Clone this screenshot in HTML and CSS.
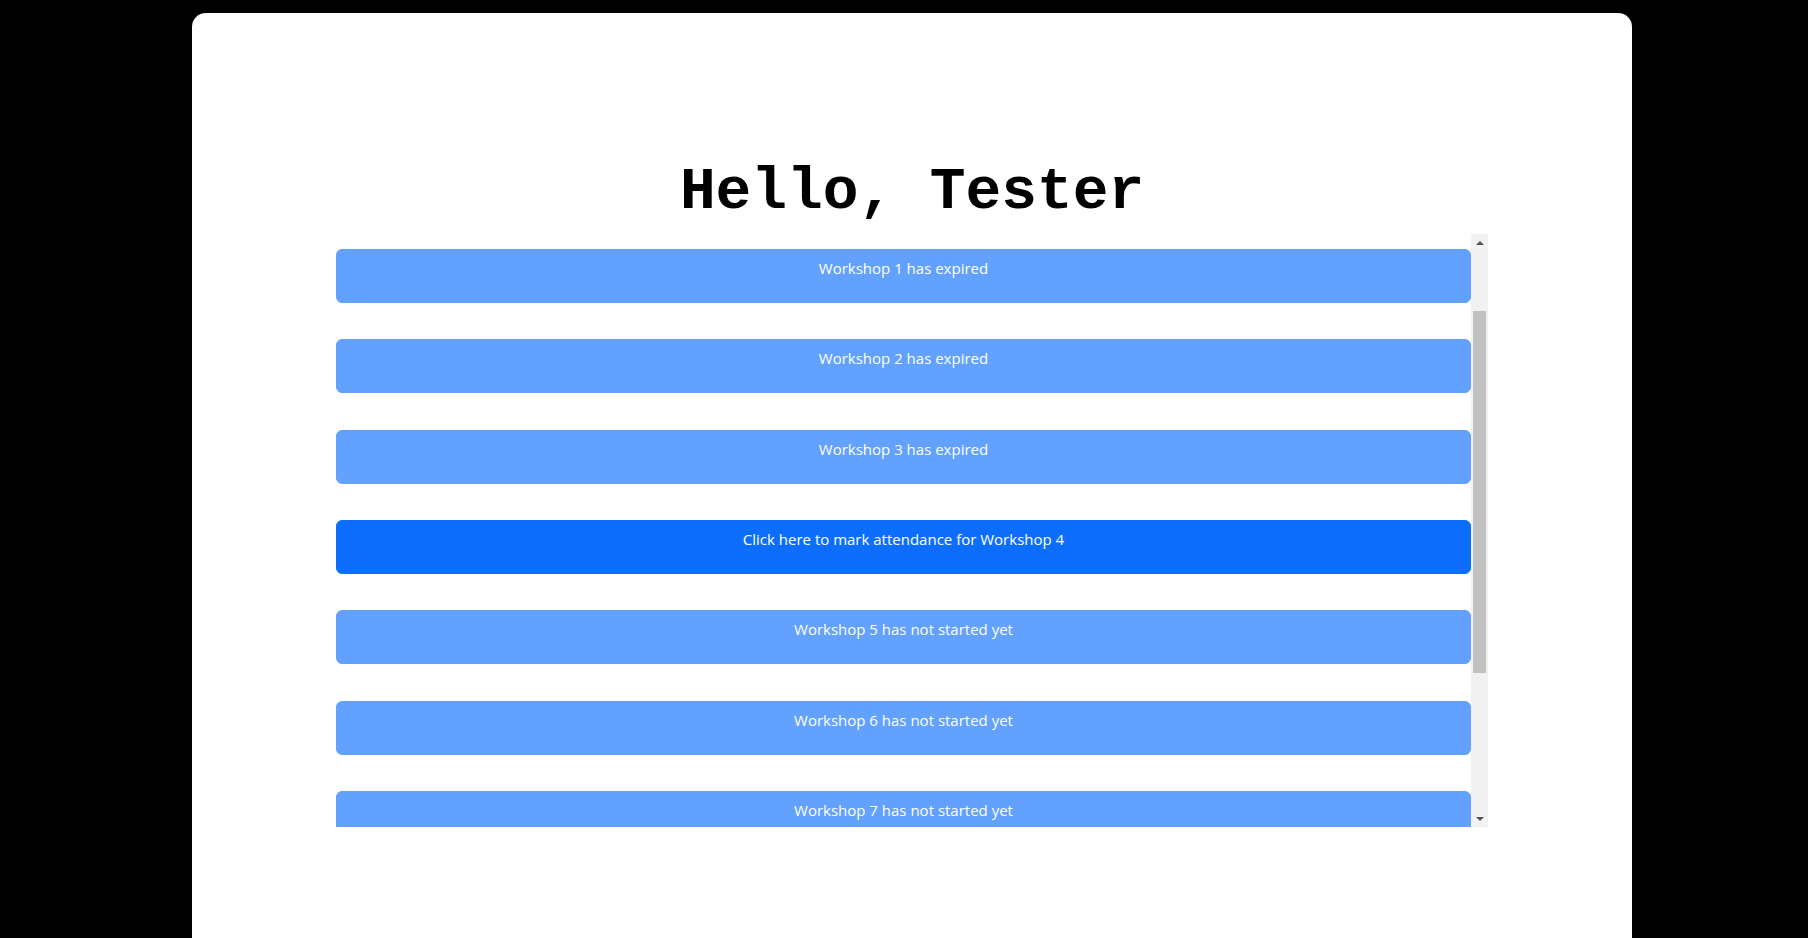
FILE: index.html
```html
<!DOCTYPE html>
<html>
<head>
<meta charset="utf-8">
<title>Workshops</title>
<link rel="stylesheet" href="styles.css">
</head>
<body>
<div class="page">
  <main class="card">
    <h1 class="title">Hello, Tester</h1>
    <div class="list-wrap">
      <div class="list">
        <button class="btn btn-disabled" disabled>Workshop 1 has expired</button>
        <button class="btn btn-disabled" disabled>Workshop 2 has expired</button>
        <button class="btn btn-disabled" disabled>Workshop 3 has expired</button>
        <button class="btn btn-active">Click here to mark attendance for Workshop 4</button>
        <button class="btn btn-disabled" disabled>Workshop 5 has not started yet</button>
        <button class="btn btn-disabled" disabled>Workshop 6 has not started yet</button>
        <button class="btn btn-disabled" disabled>Workshop 7 has not started yet</button>
        <button class="btn btn-disabled" disabled>Workshop 8 has not started yet</button>
      </div>
      <div class="scrollbar" aria-hidden="true">
        <div class="sb-btn"><span class="arrow-up"></span></div>
        <div class="sb-track"><div class="sb-thumb"></div></div>
        <div class="sb-btn"><span class="arrow-down"></span></div>
      </div>
    </div>
  </main>
</div>
</body>
</html>
```
FILE: styles.css
```css
html, body {
  margin: 0;
  padding: 0;
  background: #000;
  height: 100%;
  overflow: hidden;
}
.page {
  padding: 13px 176px 0 192px;
  height: 100%;
  box-sizing: border-box;
}
.card {
  width: 1440px;
  height: 925px;
  background: #fff;
  border-radius: 14px 14px 0 0;
  box-sizing: border-box;
  padding: 144px 144px 0 144px;
  display: flex;
  flex-direction: column;
}
.title {
  margin: 0 0 7px 0;
  font-family: "Liberation Mono", "DejaVu Sans Mono", monospace;
  font-weight: 700;
  font-size: 59.5px;
  line-height: 70px;
  text-align: center;
  color: #000;
}
.list-wrap {
  display: flex;
  height: 593px;
}
.list {
  flex: 1;
  overflow: hidden;
  display: flex;
  flex-direction: column;
  gap: 36.35px;
  padding-top: 15px;
}
.btn {
  flex-shrink: 0;
  height: 54px;
  border: 1px solid transparent;
  border-radius: 6px;
  padding: 6px 12px 0 12px;
  font-family: "Open Sans", "Noto Sans", sans-serif;
  font-size: 15px;
  line-height: 24px;
  color: #fff;
  text-align: center;
  display: flex;
  justify-content: center;
  align-items: flex-start;
}
.btn-disabled {
  background: #62a1fe;
  border-color: #62a1fe;
}
.btn-active {
  background: #0d6efd;
  border-color: #0d6efd;
}
.scrollbar {
  width: 17px;
  background: #f1f1f1;
  display: flex;
  flex-direction: column;
}
.sb-btn {
  height: 17px;
  display: flex;
  align-items: center;
  justify-content: center;
}
.arrow-up {
  width: 0;
  height: 0;
  border-left: 4px solid transparent;
  border-right: 4px solid transparent;
  border-bottom: 4px solid #505050;
}
.arrow-down {
  width: 0;
  height: 0;
  border-left: 4px solid transparent;
  border-right: 4px solid transparent;
  border-top: 4px solid #505050;
}
.sb-track {
  flex: 1;
  padding: 60px 2px 0 2px;
}
.sb-thumb {
  height: 362px;
  background: #c1c1c1;
}
```
